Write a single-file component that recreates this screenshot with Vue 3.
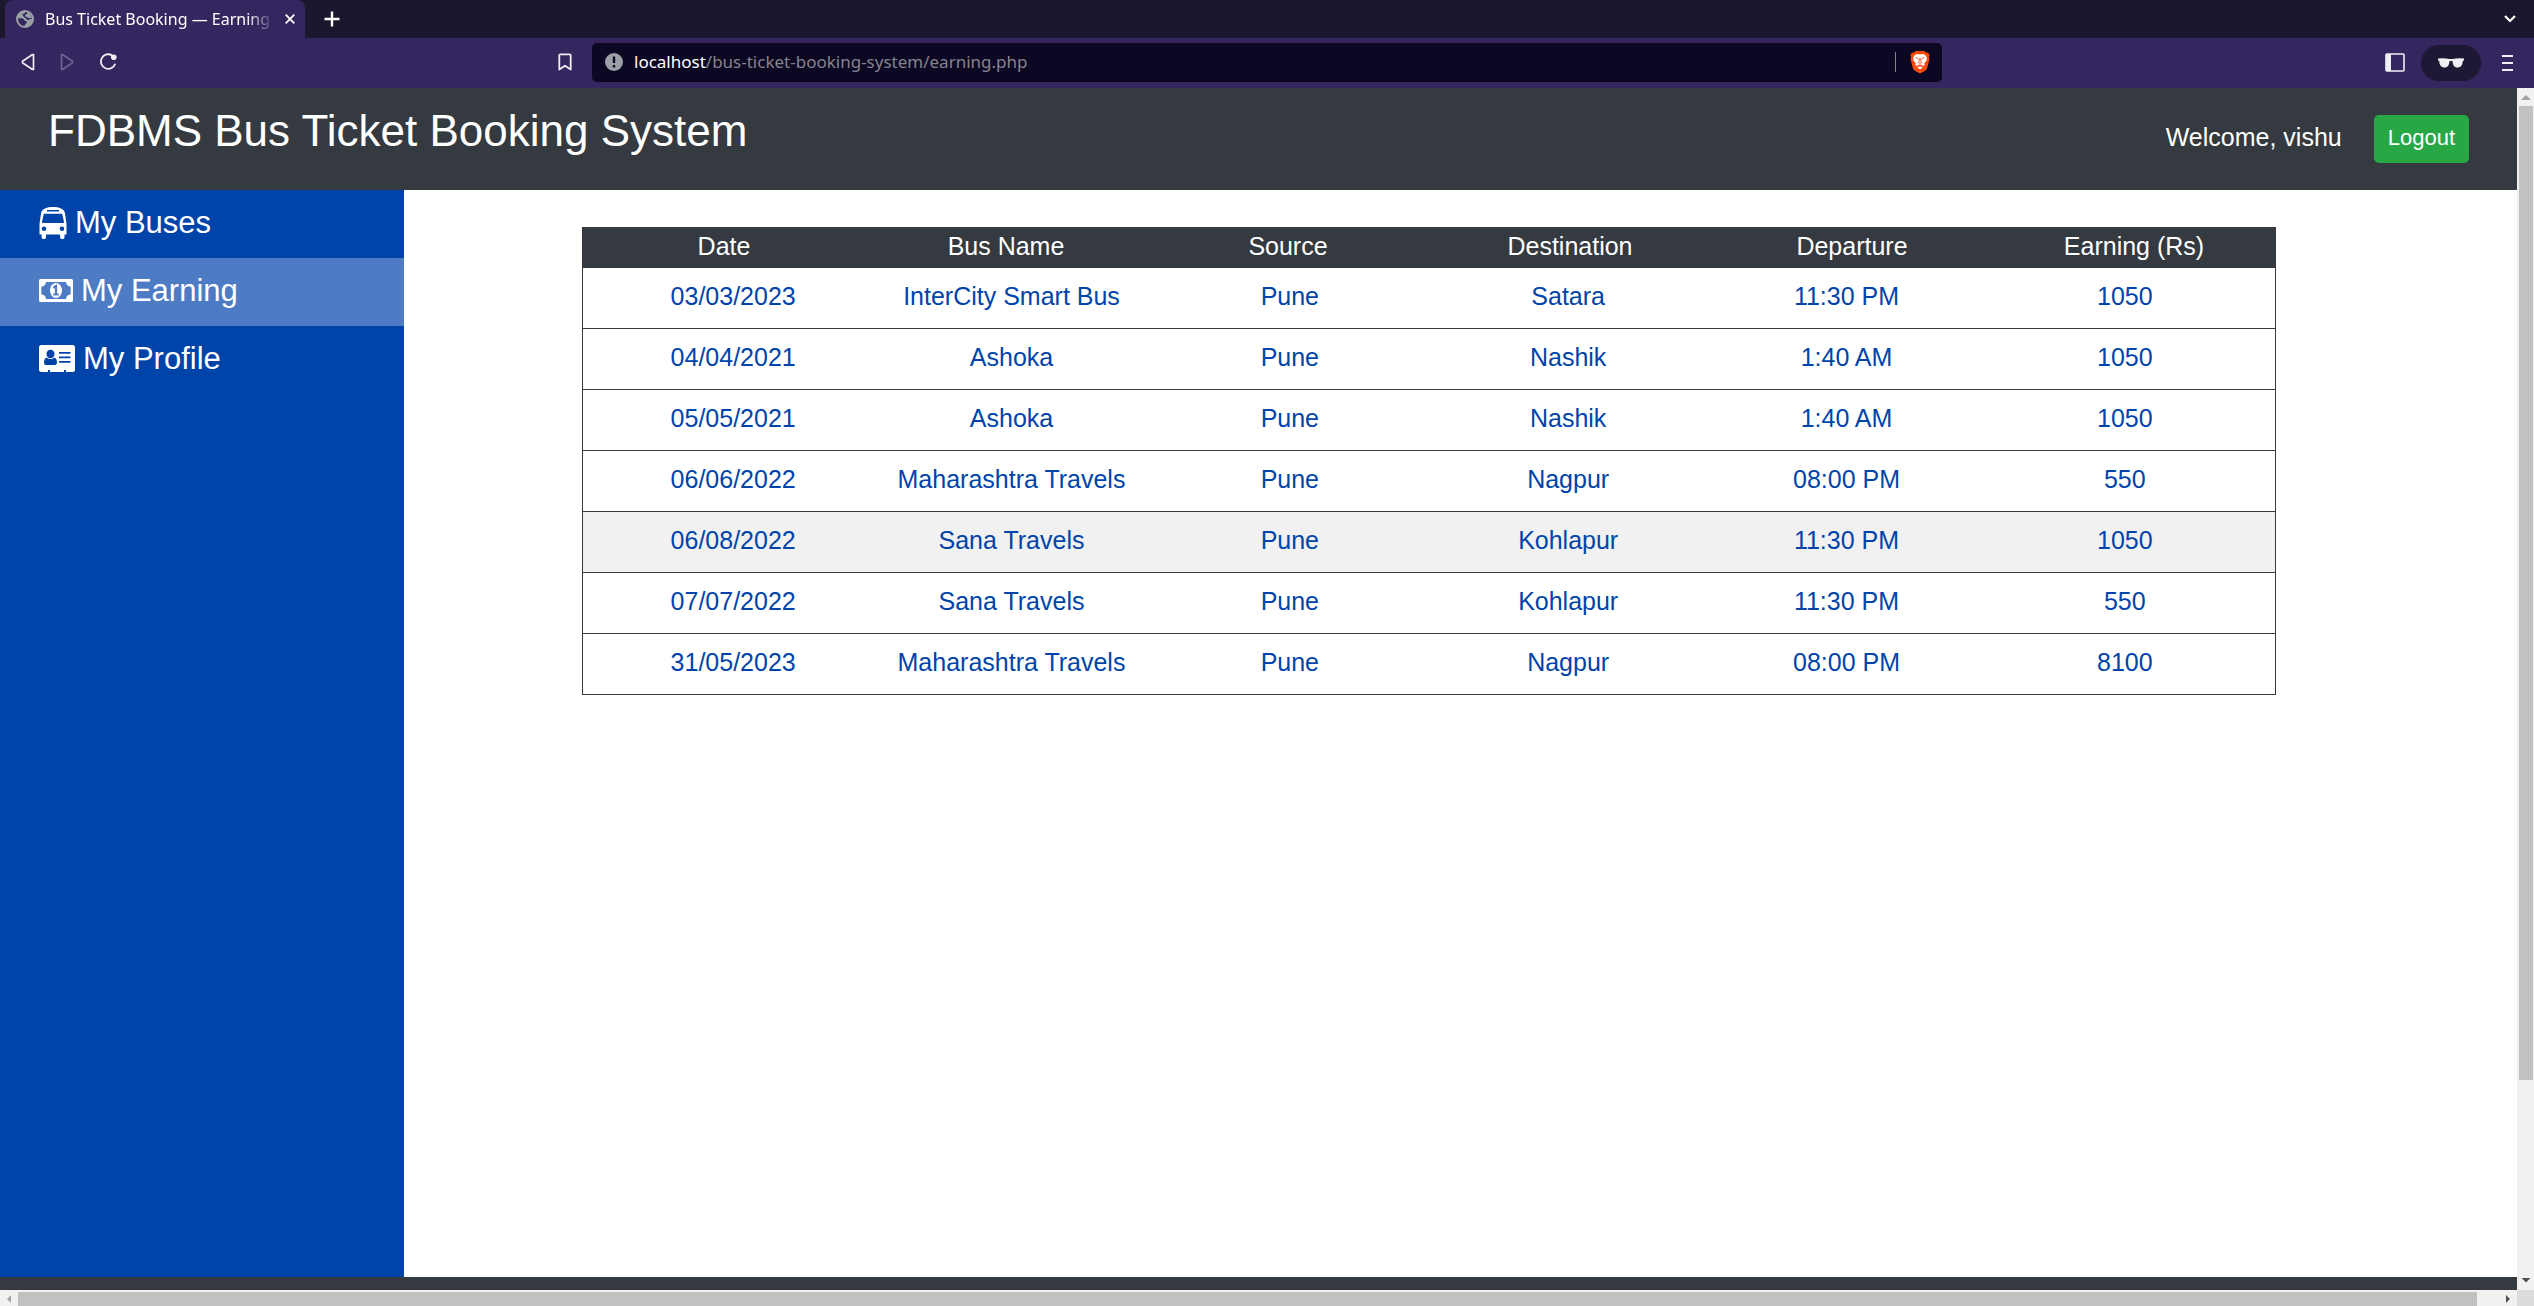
<script setup>
const navItems = [
  { label: 'My Buses', icon: 'bus' },
  { label: 'My Earning', icon: 'money', active: true },
  { label: 'My Profile', icon: 'card' },
]

const columns = ['Date', 'Bus Name', 'Source', 'Destination', 'Departure', 'Earning (Rs)']

const rows = [
  ['03/03/2023', 'InterCity Smart Bus', 'Pune', 'Satara', '11:30 PM', '1050'],
  ['04/04/2021', 'Ashoka', 'Pune', 'Nashik', '1:40 AM', '1050'],
  ['05/05/2021', 'Ashoka', 'Pune', 'Nashik', '1:40 AM', '1050'],
  ['06/06/2022', 'Maharashtra Travels', 'Pune', 'Nagpur', '08:00 PM', '550'],
  ['06/08/2022', 'Sana Travels', 'Pune', 'Kohlapur', '11:30 PM', '1050'],
  ['07/07/2022', 'Sana Travels', 'Pune', 'Kohlapur', '11:30 PM', '550'],
  ['31/05/2023', 'Maharashtra Travels', 'Pune', 'Nagpur', '08:00 PM', '8100'],
]
const hoveredRow = 4
</script>

<template>
  <div class="window">
    <div class="tab-strip">
      <div class="tab">
        <svg width="18" height="18" viewBox="0 0 18 18">
          <circle cx="9" cy="9" r="9" fill="#9aa0a6" />
          <path d="M2 8.300C4 8.200 7 8 8 9.300c.6 1 .2 1.700 1.700 1.800 1.300.1 1.300 1.200.6 2.100-.6.800-1.600.9-1.600 2.800C4.800 16 2 12.800 2 8.300z" fill="#35265f" />
          <path d="M9.500 2C8.800 2.900 8.900 3.500 7.600 3.700c-1.400.2-1.600 1.400-.6 1.900.9.500.2 1.700 1.500 1.900 1.200.2 1.300.8 2 1.700.9 1.100 2.600.7 3.400 0 .7-.6 1.500-.4 2.100-.1C15.900 4.900 13 2.200 9.500 2z" fill="#35265f" />
          <path d="M11 2.300c.3 1.500-.4 2-1.600 2.600-1 .5-.3 1.800.9 1.900 1.500.1 1.500 1.700 3 1.300 1-.3 1.700-.6 2.600-.3-.5-2.700-2.400-4.900-4.900-5.500z" fill="#9aa0a6" />
        </svg>
        <span class="tab-title">Bus Ticket Booking — Earning</span>
        <button class="plain" aria-label="Close tab">
          <svg width="10" height="10" viewBox="0 0 10 10"><path d="M.7.7l8.600 8.600M9.300.7L.7 9.300" stroke="#fff" stroke-width="1.800" /></svg>
        </button>
      </div>
      <button class="plain new-tab" aria-label="New tab">
        <svg width="16" height="16" viewBox="0 0 16 16"><path d="M8 .5v15M.5 8h15" stroke="#fff" stroke-width="2.400" /></svg>
      </button>
      <button class="plain tab-search" aria-label="Search tabs">
        <svg width="12" height="8" viewBox="0 0 12 8"><path d="M1 1l5 5 5-5" fill="none" stroke="#fff" stroke-width="2.200" /></svg>
      </button>
    </div>

    <div class="toolbar">
      <div class="nav-buttons">
        <button class="plain" aria-label="Back">
          <svg width="14" height="18" viewBox="0 0 14 18"><path d="M11.500 1.500h1v15h-1L1.500 9.700V8.300z" fill="none" stroke="#f0eff3" stroke-width="1.700" stroke-linejoin="round" /></svg>
        </button>
        <button class="plain" aria-label="Forward">
          <svg width="14" height="18" viewBox="0 0 14 18"><path d="M2.500 1.500h-1v15h1l10-6.800V8.300z" fill="none" stroke="#6e6290" stroke-width="1.700" stroke-linejoin="round" /></svg>
        </button>
        <button class="plain" aria-label="Reload">
          <svg width="18" height="18" viewBox="0 0 18 18">
            <path d="M13.200 2.400A7.300 7.300 0 1 0 16.200 10.800" fill="none" stroke="#f0eff3" stroke-width="1.800" />
            <circle cx="14.800" cy="4.300" r="2.800" fill="#f0eff3" />
          </svg>
        </button>
        <button class="plain bookmark" aria-label="Bookmark">
          <svg width="14" height="18" viewBox="0 0 14 18"><path d="M1.300 2.300q0-1 1-1h9.400q1 0 1 1v14.200L7 12.700l-5.700 3.800z" fill="none" stroke="#f0eff3" stroke-width="1.800" stroke-linejoin="round" /></svg>
        </button>
      </div>
      <div class="address">
        <svg width="18" height="18" viewBox="0 0 18 18">
          <circle cx="9" cy="9" r="9" fill="#9aa0a6" />
          <path d="M9 3.500v6.500M9 12v2.400" stroke="#0c0722" stroke-width="2.400" />
        </svg>
        <span class="url"><b>localhost</b>/bus-ticket-booking-system/earning.php</span>
        <span class="divider"></span>
        <svg width="20" height="24" viewBox="0 0 20 24">
          <path d="M5.500 1h9l1.500 1.700 2-.2L19.500 5l-.6 2 .6 2-2.200 8.500c-.6 2-1.300 2.600-2.500 3.500L10 23.500 5.200 21c-1.200-.9-1.900-1.500-2.500-3.500L.5 9l.6-2-.6-2L2 2.500l2 .2z" fill="#fb4a0c" />
          <path d="M10 4.600l2.200-.5 2.800.6 1.900 3-.5 3-2.200 2.600.6 1.600-1.500 1.200-1.700-1L10 14.500l-1.600.6-1.700 1-1.500-1.200.6-1.600-2.200-2.600-.5-3 1.900-3 2.800-.6z M10 16l2.600 1.400L10 19.500l-2.600-2.100z" fill="#fff" />
          <path d="M5.500 7.700l3 .8M14.500 7.700l-3 .8M9.300 8v3l-1.300 1.500 2 .8 2-.8-1.300-1.500V8" fill="none" stroke="#fb4a0c" stroke-width=".8" />
        </svg>
      </div>
      <div class="tools">
        <button class="plain" aria-label="Sidebar">
          <svg width="20" height="19" viewBox="0 0 20 19">
            <rect x="1" y="1" width="18" height="17" rx="1" fill="none" stroke="#f0eff3" stroke-width="1.600" />
            <path d="M1 1h5v17H1z" fill="#f0eff3" />
          </svg>
        </button>
        <button class="plain private" aria-label="Private window">
          <svg width="26" height="10" viewBox="0 0 26 10"><path d="M0 .5Q6-.3 11.500 1h3Q20-.3 26 .5v1.800l-1.200.7C24.500 7.500 22.500 9.500 19.500 9.500c-3.500 0-4.700-2.500-5-6.500h-3c-.3 4-1.500 6.500-5 6.500-3 0-5-2-5.300-6.500L0 2.300z" fill="#f0eff3" /></svg>
        </button>
        <button class="plain menu" aria-label="Menu">
          <svg width="12" height="16" viewBox="0 0 12 16"><path d="M0 1h11M0 8h11M0 15h11" stroke="#f0eff3" stroke-width="1.800" /></svg>
        </button>
      </div>
    </div>

    <div class="viewport">
      <div class="page">
        <header class="header">
          <h1>FDBMS Bus Ticket Booking System</h1>
          <div class="account">
            <p>Welcome, vishu</p>
            <button class="logout">Logout</button>
          </div>
        </header>

        <div class="body">
          <nav class="sidebar">
            <a v-for="item in navItems" :key="item.label" href="#" :class="{ active: item.active }">
              <svg v-if="item.icon === 'bus'" width="28" height="32" viewBox="0 0 28 32">
                <path fill="#fff" fill-rule="evenodd" d="M6 1.500C8.500.4 11 0 14 0s5.500.4 8 1.500c2.500 1.100 3.500 2.500 4 5L27.500 17v10.500H25.500V30a2.200 2.200 0 0 1-4.400 0v-2.500H7V30a2.200 2.200 0 0 1-4.400 0v-2.500H.5V17L2 6.500c.5-2.500 1.500-3.900 4-5zM8 2.900v1.600h12V2.900zM5.500 6.700Q4.800 6.700 4.600 7.500L3 15q-.2 1 .8 1h20.400q1 0 .8-1L23.400 7.500q-.2-.8-.9-.8zM5 19.500a2.300 2.300 0 1 0 0 4.600 2.300 2.300 0 0 0 0-4.600zm18 0a2.300 2.300 0 1 0 0 4.600 2.300 2.300 0 0 0 0-4.600z" />
              </svg>
              <svg v-else-if="item.icon === 'money'" width="34" height="24" viewBox="0 0 34 24">
                <path fill="#fff" fill-rule="evenodd" d="M1.500 0h31Q34 0 34 1.500v20q0 1.500-1.500 1.500h-31Q0 23 0 21.500v-20Q0 0 1.500 0zM7 3A4.500 4.500 0 0 1 2.300 7.500v8A4.500 4.500 0 0 1 7 20h20a4.500 4.500 0 0 1 4.700-4.500v-8A4.500 4.500 0 0 1 27 3z" />
                <ellipse cx="17" cy="11.500" rx="6" ry="7.500" fill="#fff" />
                <path d="M14.300 8.700L17 7v8.500M14.300 15.500h5.400" fill="none" stroke="#4e7cc4" stroke-width="2.200" />
              </svg>
              <svg v-else width="36" height="28" viewBox="0 0 36 28">
                <path fill="#fff" fill-rule="evenodd" d="M2.500 0h31Q36 0 36 2.500v22q0 2.500-2.500 2.500H27v-2h-2v2H11v-2H9v2H2.500Q0 27 0 24.500v-22Q0 0 2.500 0zM20 7v1.700h11.500V7zm0 4.500v1.700h11.500v-1.700zm0 4.600v1.700h11.500v-1.700z" />
                <path fill="#0044aa" d="M11.500 4.800a4 4 0 0 1 4 4.200c0 2.300-1.600 4.300-4 4.300s-4-2-4-4.300a4 4 0 0 1 4-4.200zM7.800 12.600c2 2 5.400 2 7.400 0 2.200.8 2.800 3 2.800 5 0 1.600-.8 2.400-2 2.400H7c-1.200 0-2-.8-2-2.400 0-2 .6-4.200 2.800-5z" />
              </svg>
              <span>{{ item.label }}</span>
            </a>
          </nav>

          <main class="content">
            <table>
              <thead>
                <tr>
                  <th v-for="name in columns" :key="name" scope="col">{{ name }}</th>
                </tr>
              </thead>
              <tbody>
                <tr v-for="(row, i) in rows" :key="i" :class="{ hovered: i === hoveredRow }">
                  <td v-for="(cell, j) in row" :key="j">{{ cell }}</td>
                </tr>
              </tbody>
            </table>
          </main>
        </div>
        <footer class="footer"></footer>
      </div>

      <div class="scroll-y">
        <svg width="17" height="18" viewBox="0 0 17 18"><path d="M4 12h10L9 7z" fill="#a3a3a3" /></svg>
        <span class="thumb"></span>
        <svg width="17" height="18" viewBox="0 0 17 18"><path d="M4.500 6h9L9 10.500z" fill="#505050" /></svg>
      </div>
      <div class="scroll-x">
        <svg width="18" height="16" viewBox="0 0 18 16"><path d="M11 5v8L7 9z" fill="#a3a3a3" /></svg>
        <span class="thumb"></span>
        <svg width="18" height="16" viewBox="0 0 18 16"><path d="M7 5v8l4-4z" fill="#505050" /></svg>
      </div>
      <div class="corner"></div>
    </div>
  </div>
</template>

<style>
body {
  margin: 0;
  background: #fff;
}
</style>

<style scoped>
* {
  box-sizing: border-box;
}
svg {
  display: block;
  flex: none;
}
.window {
  display: flex;
  flex-direction: column;
  height: 100vh;
  overflow: hidden;
  font-family: "Liberation Sans", Arial, sans-serif;
}
.plain {
  display: flex;
  align-items: center;
  justify-content: center;
  flex: none;
  padding: 0;
  border: 0;
  background: none;
}

.tab-strip {
  display: flex;
  flex: none;
  height: 38px;
  padding: 0 18px 0 5px;
  background: #1a172e;
}
.tab {
  display: flex;
  align-items: center;
  width: 300px;
  padding: 0 10px 0 11px;
  border-radius: 8px 8px 0 0;
  background: #35265f;
}
.tab-title {
  flex: 1;
  margin: 0 11px;
  overflow: hidden;
  white-space: nowrap;
  font: 16px/24px "Noto Sans", sans-serif;
  color: #fff;
  mask-image: linear-gradient(to right, #000 88%, transparent);
}
.new-tab {
  margin-left: 19px;
}
.tab-search {
  margin-left: auto;
}

.toolbar {
  display: grid;
  grid-template-columns: minmax(0, 1fr) minmax(0, 1350px) minmax(0, 1fr);
  flex: none;
  align-items: center;
  height: 50px;
  padding-bottom: 1px;
  background: #35265f;
}
.nav-buttons {
  display: flex;
  gap: 25px;
  padding: 0 20px 2px 21px;
}
.bookmark {
  margin-left: auto;
}
.address {
  display: flex;
  align-items: center;
  height: 39px;
  padding: 0 12px 2px 13px;
  border-radius: 5px;
  background: #0c0722;
}
.url {
  flex: 1;
  margin-left: 11px;
  font: 17px/24px "Noto Sans", sans-serif;
  color: #85838f;
}
.url b {
  font-weight: 400;
  color: #fff;
}
.divider {
  width: 1px;
  height: 20px;
  margin-right: 14px;
  background: #85838f;
}
.tools {
  display: flex;
  align-items: center;
  justify-content: flex-end;
  gap: 16px;
  padding-right: 20px;
}
.private {
  width: 60px;
  height: 36px;
  border-radius: 18px;
  background: #1d1833;
}
.menu {
  margin-left: 5px;
}

.viewport {
  display: grid;
  flex: 1;
  min-height: 0;
  grid-template-columns: minmax(0, 1fr) 17px;
  grid-template-rows: minmax(0, 1fr) 16px;
}
.page {
  display: flex;
  flex-direction: column;
  background: #fff;
}
.header {
  display: flex;
  justify-content: space-between;
  align-items: flex-start;
  height: 102px;
  padding: 17px 48px 0;
  background: #343a40;
  color: #fff;
}
h1 {
  margin: 0;
  font-size: 44px;
  font-weight: 400;
  line-height: 52px;
}
.account {
  display: flex;
  gap: 32px;
  padding-top: 10px;
}
.account p {
  margin: 0;
  font-size: 25px;
  line-height: 44px;
}
.logout {
  height: 48px;
  padding: 0 14px 2px;
  border: 0;
  border-radius: 5px;
  background: #28a745;
  color: #fff;
  font: 22px/44px "Liberation Sans", Arial, sans-serif;
}
.body {
  display: flex;
  flex: 1;
}
.sidebar {
  width: 404px;
  background: #0044aa;
}
.sidebar a {
  display: flex;
  align-items: center;
  gap: 8px;
  height: 68px;
  padding: 0 0 2px 39px;
  color: #fff;
  font-size: 31px;
  line-height: 36px;
  text-decoration: none;
}
.sidebar a.active {
  background: #4e7cc4;
}
.content {
  flex: 1;
  padding: 37px 241px 0 178px;
}
table {
  display: block;
  border: 1px solid #343a40;
  border-bottom: 0;
  font-size: 25px;
  line-height: 36px;
  text-align: center;
}
thead,
tbody {
  display: block;
}
tr {
  display: grid;
  grid-template-columns: repeat(6, minmax(0, 1fr));
}
th,
td {
  padding: 0;
  font-weight: 400;
}
thead tr {
  padding-bottom: 4px;
  background: #343a40;
  color: #fff;
}
tbody tr {
  padding: 10px 11px 14px;
  border-bottom: 1px solid #343a40;
  color: #0044aa;
}
tbody tr.hovered {
  background: #f1f1f1;
}
.footer {
  height: 13px;
  background: #343a40;
}

.scroll-y {
  display: flex;
  flex-direction: column;
  background: #f1f1f1;
}
.scroll-y .thumb {
  width: 14px;
  height: 81%;
  margin: 0 0 auto 2px;
  background: #c1c1c1;
}
.scroll-x {
  display: flex;
  background: #f1f1f1;
}
.scroll-x .thumb {
  flex: 1;
  height: 14px;
  margin: 2px 22px 0 0;
  background: #c1c1c1;
}
.corner {
  background: #dcdcdc;
}
</style>
